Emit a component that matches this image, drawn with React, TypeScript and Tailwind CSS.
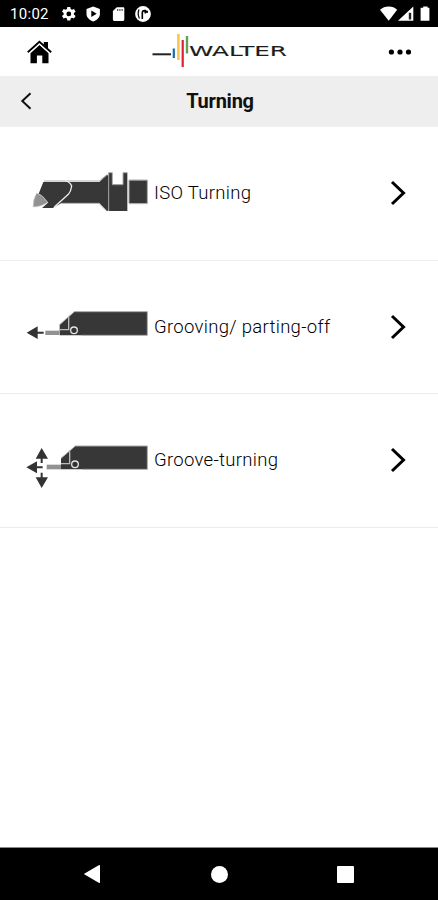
import type { ReactNode } from 'react';

function StatusBar() {
  return (
    <div className="flex h-[27px] shrink-0 items-center bg-black text-white">
      <span className="ml-[10px] mt-[2px] w-[39px] whitespace-nowrap text-[15px] leading-none tracking-[0.3px]">10:02</span>
      <svg className="ml-[11px]" width="96" height="27" viewBox="0 0 96 27" fill="#fff">
        {/* settings */}
        <path d="M7.3 7h3l.4 2.1 1.3.7 2-.8 1.6 2.7-1.7 1.3v1.6l1.7 1.3-1.6 2.7-2-.8-1.3.7-.4 2.1h-3l-.4-2.1-1.3-.7-2 .8L2 15.9l1.7-1.3V13L2 11.7 3.6 9l2 .8 1.3-.7z" />
        <circle cx="8.8" cy="13.9" r="2.4" fill="#000" />
        {/* play protect */}
        <path d="M33.2 6.5l6.7 2.4v5c0 3.5-2.9 6.1-6.7 7.6-3.8-1.5-6.7-4.1-6.7-7.6v-5z" />
        <path d="M31.3 10.5l5.4 3.2-5.4 3.2z" fill="#000" />
        {/* sd card */}
        <path d="M56.8 7.2h6.3c.8 0 1.2.5 1.2 1.2v11.2c0 .8-.5 1.3-1.2 1.3h-8.9c-.8 0-1.3-.5-1.3-1.3v-8.5z" />
        <path d="M57.2 9.1h1v2h-1zm2.2 0h1v2h-1zm2.2 0h1v2h-1z" fill="#333" />
        <circle cx="83" cy="14" r="7.9" />
        <path d="M79 9.6q-1.8 4.4.4 8.8" fill="none" stroke="#000" strokeWidth="1.2" />
        <path d="M82.3 19v-6.2q0-2.2 2.2-2.2h.8v3" fill="none" stroke="#000" strokeWidth="1.6" />
        <circle cx="86.9" cy="11.7" r="1.2" fill="#000" />
      </svg>
      <svg className="ml-auto" width="58" height="27" viewBox="0 0 58 27" fill="#fff">
        <path d="M0 9.7C2.3 7.6 5.4 6.4 8.7 6.4s6.4 1.2 8.5 3.3l-8.5 11z" />
        <path d="M18 20.8L33.3 6.6v14.2z" />
        <path d="M28.8 12.8h2.4v6.7h-2.4z" fill="#222" />
        <path d="M43.2 6.4h4.4v1.4h1.8v13h-8.8v-13h2.6z" />
      </svg>
    </div>
  );
}

function WalterLogo() {
  return (
    <svg width="140" height="48" viewBox="0 0 140 48" className="ml-[98px]">
      <path d="M2.5 26.3H21" stroke="#222" strokeWidth="2" />
      <path d="M23.8 20.5v9.5" stroke="#1769b0" strokeWidth="2.2" />
      <path d="M28.4 6v26" stroke="#f4c84e" strokeWidth="2.6" />
      <path d="M32.7 12v27" stroke="#e0202d" strokeWidth="2.2" />
      <path d="M37 8v17.5" stroke="#62a457" strokeWidth="2.4" />
      <text
        x="39"
        y="28.3"
        textLength="98"
        lengthAdjust="spacingAndGlyphs"
        className="font-['DejaVu_Sans',sans-serif] text-[14px]"
        fill="#1c1c1c"
        stroke="#1c1c1c"
        strokeWidth="0.12"
      >
        WALTER
      </text>
    </svg>
  );
}

function Header() {
  return (
    <div className="flex h-[49px] shrink-0 items-center bg-white">
      <svg className="ml-[27px]" width="25" height="24" viewBox="0 0 25 24">
        <path d="M16.8 2h4.2v7l-4.2-4z" />
        <path d="M3.5 13.2L12.5 5l9 8.2v10h-6.2V15.5h-5.4v7.7H3.5z" />
        <path d="M.8 12.3L12.4 1.7l11.8 10.6" fill="none" stroke="#000" strokeWidth="1.9" />
        <path d="M2 13.6l10.4-9.5 10.6 9.5" fill="none" stroke="#fff" strokeWidth="0.8" />
      </svg>
      <WalterLogo />
      <svg className="ml-auto mr-[26px]" width="24" height="8" viewBox="0 0 24 8">
        <circle cx="3.4" cy="4" r="2.6" />
        <circle cx="12" cy="4" r="2.6" />
        <circle cx="20.5" cy="4" r="2.6" />
      </svg>
    </div>
  );
}

const isoTurning = (
  <svg className="shrink-0" width="135" height="133" viewBox="0 -99 405 399">
    <g fill="#373737">
      <path d="M70 66h168l22-20v106l-22-23H125l-27 15H66l18-16-28-27z" />
      <path d="M266 38h11v35h32V38h13v115h-56z" />
      <path d="M258 46h10v106h-10zM327 61h55v69h-55z" />
    </g>
    <g fill="none" stroke="#aaa" strokeWidth="3">
      <path d="M72 63h166l24-20M125 130h112l24 24" />
      <path d="M266 153V38h11v36h32V38h13" />
      <path d="M327 130V60h55v71h-55" />
    </g>
    <path d="M136 62q14 4 19 16-2 16-10 25l-42 38" fill="none" stroke="#eee" strokeWidth="4" />
    <path d="M50 99q18 5 33 28-18 14-44 14 0-24 11-42z" fill="#929292" stroke="#ddd" strokeWidth="2" />
  </svg>
);

const grooving = (
  <svg className="shrink-0" width="135" height="133" viewBox="0 -118 405 399">
    <path d="M163 37h219v71H119V76z" fill="#373737" />
    <path d="M119 76l44-39h219v71H184" fill="none" stroke="#aaa" strokeWidth="3" />
    <path d="M146 52v39h-27" fill="none" stroke="#bbb" strokeWidth="4" />
    <path d="M76 94h42v13H76z" fill="#929292" />
    <circle cx="162" cy="93" r="10" fill="#333" stroke="#e5e5e5" strokeWidth="4" />
    <path d="M20 100l33-19v16h18v6H53v16z" fill="#333" />
  </svg>
);

const grooveTurning = (
  <svg className="shrink-0" width="135" height="133" viewBox="0 -123 405 399">
    <path d="M166 33h216v70H123V70z" fill="#373737" />
    <path d="M123 70l43-37h216v70H187" fill="none" stroke="#aaa" strokeWidth="3" />
    <path d="M149 49v37h-26" fill="none" stroke="#bbb" strokeWidth="4" />
    <path d="M80 89h43v14H80z" fill="#929292" />
    <circle cx="165" cy="88" r="10" fill="#333" stroke="#e5e5e5" strokeWidth="4" />
    <g fill="#333">
      <path d="M19 97l32-18v15h17v6H51v15z" />
      <path d="M65 39l19 32H68v13h-6V71H47z" />
      <path d="M65 159l19-32H68v-14h-6v14H47z" />
    </g>
  </svg>
);

interface Item {
  title: string;
  picture: ReactNode;
}

const items: Item[] = [
  { title: 'ISO Turning', picture: isoTurning },
  { title: 'Grooving/ parting-off', picture: grooving },
  { title: 'Groove-turning', picture: grooveTurning },
];

export default function App() {
  return (
    <div className="flex h-screen w-full flex-col overflow-hidden bg-white font-['Roboto',sans-serif] text-black">
      <StatusBar />
      <Header />

      <div className="grid h-[51px] shrink-0 grid-cols-[1fr_auto_1fr] items-center bg-[#eeeeee]">
        <svg className="mb-px ml-5" width="12" height="18" viewBox="0 0 12 18">
          <path d="M10.5 1.2L2.3 9l8.2 7.8" fill="none" stroke="#111" strokeWidth="2" />
        </svg>
        <h1 className="mb-0.5 ml-0.5 text-[20px] font-bold leading-none tracking-[-0.25px] text-[#111]">Turning</h1>
      </div>

      <div className="flex-1">
        {items.map((item) => (
          <div key={item.title} className="flex h-[133.5px] items-center border-b border-[#ededed] pl-5">
            {item.picture}
            <span className="-ml-px whitespace-nowrap text-[18.5px] font-light leading-none tracking-[0.3px] text-black">
              {item.title}
            </span>
            <svg className="ml-auto mr-8" width="16" height="26" viewBox="0 0 16 26">
              <path d="M2 2l11.5 11L2 24" fill="none" stroke="#000" strokeWidth="3" />
            </svg>
          </div>
        ))}
      </div>

      <div className="flex h-[53px] shrink-0 items-center border-t border-[#888] bg-black">
        <svg className="ml-[83px]" width="18" height="20" viewBox="0 0 18 20" fill="#fff">
          <path d="M.8 10L15.7 1.2q1.3-.5 1.3.6v16.4q0 1.1-1.3.6z" />
        </svg>
        <div className="ml-[110px] size-[17px] rounded-full bg-white" />
        <div className="ml-[109px] size-[17px] rounded-[1px] bg-white" />
      </div>
    </div>
  );
}
